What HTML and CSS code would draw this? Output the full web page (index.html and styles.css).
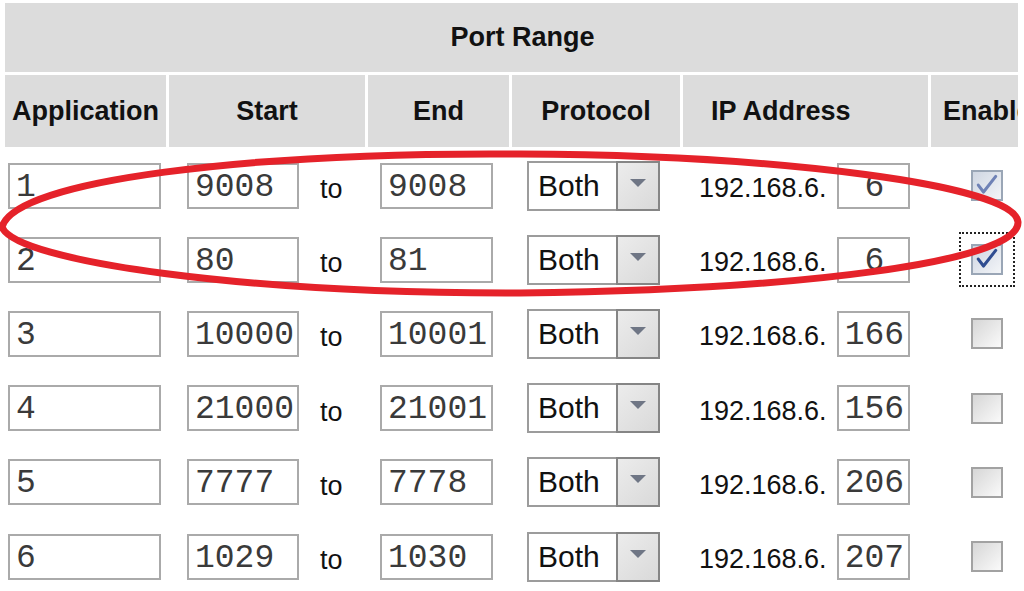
FILE: index.html
```html
<!DOCTYPE html>
<html>
<head>
<meta charset="utf-8">
<title>Port Range Forwarding</title>
<link rel="stylesheet" href="styles.css">
</head>
<body>
<div class="page">
<table class="pf">
<colgroup><col class="c-app"><col class="c-start"><col class="c-end"><col class="c-proto"><col class="c-ip"><col class="c-en"></colgroup>
<thead>
<tr class="hr1"><th colspan="6" class="h-top">Port Range</th></tr>
<tr class="hr2"><th>Application</th><th>Start</th><th>End</th><th>Protocol</th><th class="h-ip">IP Address</th><th class="h-en"><div class="clip">Enable</div></th></tr>
</thead>
<tbody>
<tr>
<td><div class="cell"><span class="fld f-app">1</span></div></td>
<td><div class="cell c-st"><span class="fld f-port">9008</span><span class="to">to</span></div></td>
<td><div class="cell c-e"><span class="fld f-port">9008</span></div></td>
<td><div class="cell c-p"><span class="sel"><span class="sel-txt">Both</span><span class="sel-btn"><i class="arr"></i></span></span></div></td>
<td><div class="cell c-i"><span class="ip">192.168.6.</span><span class="fld f-oct">&nbsp;6</span></div></td>
<td><div class="cell c-en"><span class="cb on"><svg viewBox="0 0 32 31" width="28" height="27"><path d="M6 15 L12 23 L26 5" fill="none" stroke="#6f82b6" stroke-width="3.5" stroke-linecap="round" stroke-linejoin="round"/></svg></span></div></td>
</tr>
<tr>
<td><div class="cell"><span class="fld f-app">2</span></div></td>
<td><div class="cell c-st"><span class="fld f-port">80</span><span class="to">to</span></div></td>
<td><div class="cell c-e"><span class="fld f-port">81</span></div></td>
<td><div class="cell c-p"><span class="sel"><span class="sel-txt">Both</span><span class="sel-btn"><i class="arr"></i></span></span></div></td>
<td><div class="cell c-i"><span class="ip">192.168.6.</span><span class="fld f-oct">&nbsp;6</span></div></td>
<td><div class="cell c-en"><span class="cb on focus"><svg viewBox="0 0 32 31" width="28" height="27"><path d="M6 15 L12 23 L26 5" fill="none" stroke="#2f4d91" stroke-width="3.5" stroke-linecap="round" stroke-linejoin="round"/></svg></span></div></td>
</tr>
<tr>
<td><div class="cell"><span class="fld f-app">3</span></div></td>
<td><div class="cell c-st"><span class="fld f-port">10000</span><span class="to">to</span></div></td>
<td><div class="cell c-e"><span class="fld f-port">10001</span></div></td>
<td><div class="cell c-p"><span class="sel"><span class="sel-txt">Both</span><span class="sel-btn"><i class="arr"></i></span></span></div></td>
<td><div class="cell c-i"><span class="ip">192.168.6.</span><span class="fld f-oct">166</span></div></td>
<td><div class="cell c-en"><span class="cb"></span></div></td>
</tr>
<tr>
<td><div class="cell"><span class="fld f-app">4</span></div></td>
<td><div class="cell c-st"><span class="fld f-port">21000</span><span class="to">to</span></div></td>
<td><div class="cell c-e"><span class="fld f-port">21001</span></div></td>
<td><div class="cell c-p"><span class="sel"><span class="sel-txt">Both</span><span class="sel-btn"><i class="arr"></i></span></span></div></td>
<td><div class="cell c-i"><span class="ip">192.168.6.</span><span class="fld f-oct">156</span></div></td>
<td><div class="cell c-en"><span class="cb"></span></div></td>
</tr>
<tr>
<td><div class="cell"><span class="fld f-app">5</span></div></td>
<td><div class="cell c-st"><span class="fld f-port">7777</span><span class="to">to</span></div></td>
<td><div class="cell c-e"><span class="fld f-port">7778</span></div></td>
<td><div class="cell c-p"><span class="sel"><span class="sel-txt">Both</span><span class="sel-btn"><i class="arr"></i></span></span></div></td>
<td><div class="cell c-i"><span class="ip">192.168.6.</span><span class="fld f-oct">206</span></div></td>
<td><div class="cell c-en"><span class="cb"></span></div></td>
</tr>
<tr>
<td><div class="cell"><span class="fld f-app">6</span></div></td>
<td><div class="cell c-st"><span class="fld f-port">1029</span><span class="to">to</span></div></td>
<td><div class="cell c-e"><span class="fld f-port">1030</span></div></td>
<td><div class="cell c-p"><span class="sel"><span class="sel-txt">Both</span><span class="sel-btn"><i class="arr"></i></span></span></div></td>
<td><div class="cell c-i"><span class="ip">192.168.6.</span><span class="fld f-oct">207</span></div></td>
<td><div class="cell c-en"><span class="cb"></span></div></td>
</tr>
</tbody>
</table>
<svg class="mark" width="1024" height="591" viewBox="0 0 1024 591">
<path d="M2 227 C15 180 250 152 520 154 C780 155 1015 185 1018 222 C1020 262 800 290 520 293 C250 294 15 262 2 227 Z" fill="none" stroke="#e5222a" stroke-width="7"/>
</svg>
</div>
</body>
</html>
```

FILE: styles.css
```css
html, body {
  margin: 0;
  padding: 0;
  background: #fff;
}

.page {
  position: relative;
  width: 1024px;
  height: 591px;
  overflow: hidden;
}

.pf {
  table-layout: fixed;
  width: 1019px;
  margin: 0 0 0 2px;
  border-collapse: separate;
  border-spacing: 3px;
  font-family: "Liberation Sans", Arial, sans-serif;
  color: #111;
}

.c-app { width: 161px; }
.c-start { width: 196px; }
.c-end { width: 141px; }
.c-proto { width: 168px; }
.c-ip { width: 245px; }
.c-en { width: 87px; }

.pf th {
  background: #dcdcdc;
  font-weight: bold;
  font-size: 27px;
  padding: 0;
  text-align: center;
  vertical-align: middle;
  white-space: nowrap;
}

.hr1 th { height: 69px; }
.hr2 th { height: 72px; }

.h-top { padding-left: 22px !important; }
.h-ip { text-align: left !important; padding-left: 28px !important; }
.h-en { text-align: left !important; overflow: hidden; }
.clip { overflow: hidden; white-space: nowrap; padding-left: 12px; }

.pf td {
  padding: 0;
  vertical-align: middle;
}

.cell {
  display: flex;
  align-items: center;
  height: 71.2px;
  padding-left: 3px;
}

.c-st { padding-left: 18px; }
.c-e { padding-left: 12px; }
.c-p { padding-left: 15px; }
.c-i { padding-left: 16px; }
.c-en { padding-left: 40px; }

.fld {
  box-sizing: border-box;
  display: block;
  height: 46px;
  border: 2px solid #aaaaaa;
  background: #fff;
  font-family: "Liberation Mono", "Courier New", monospace;
  font-size: 33px;
  line-height: 46px;
  padding-left: 6px;
  color: #3a3a3a;
  white-space: nowrap;
  overflow: hidden;
}

.f-app { width: 153px; }
.f-port { width: 112px; }
.c-e .f-port { width: 113px; }
.f-oct { width: 73px; margin-left: 10px; }

.to {
  font-size: 27px;
  margin-left: 21px;
  margin-top: 8px;
}

.ip {
  font-size: 27px;
  margin-top: 6px;
  white-space: nowrap;
}

.sel {
  box-sizing: border-box;
  display: flex;
  width: 133px;
  height: 50px;
  border: 2px solid #9c9c9c;
  background: #fff;
}

.sel-txt {
  flex: 1;
  font-size: 30px;
  line-height: 46px;
  padding-left: 9px;
}

.sel-btn {
  box-sizing: border-box;
  width: 44px;
  margin: -2px -2px -2px 0;
  border: 2px solid #858585;
  background: linear-gradient(135deg, #ececec, #d9d9d9);
  display: flex;
  align-items: center;
  justify-content: center;
}

.arr {
  display: block;
  width: 0;
  height: 0;
  border-left: 8px solid transparent;
  border-right: 8px solid transparent;
  border-top: 8px solid #6f7685;
  margin-bottom: 6px;
}

.cb {
  box-sizing: border-box;
  display: flex;
  align-items: center;
  justify-content: center;
  width: 32px;
  height: 31px;
  border: 2px solid #a2a2a2;
  background: linear-gradient(135deg, #d6d6d6, #fafafa);
}

.cb.on {
  border-color: #9aa6b6;
  background: linear-gradient(135deg, #cfd6e2, #f3f5f8);
}

.cb.focus {
  outline: 2px dotted #222;
  outline-offset: 10px;
}

.mark {
  position: absolute;
  left: 0;
  top: 0;
  pointer-events: none;
}
```
